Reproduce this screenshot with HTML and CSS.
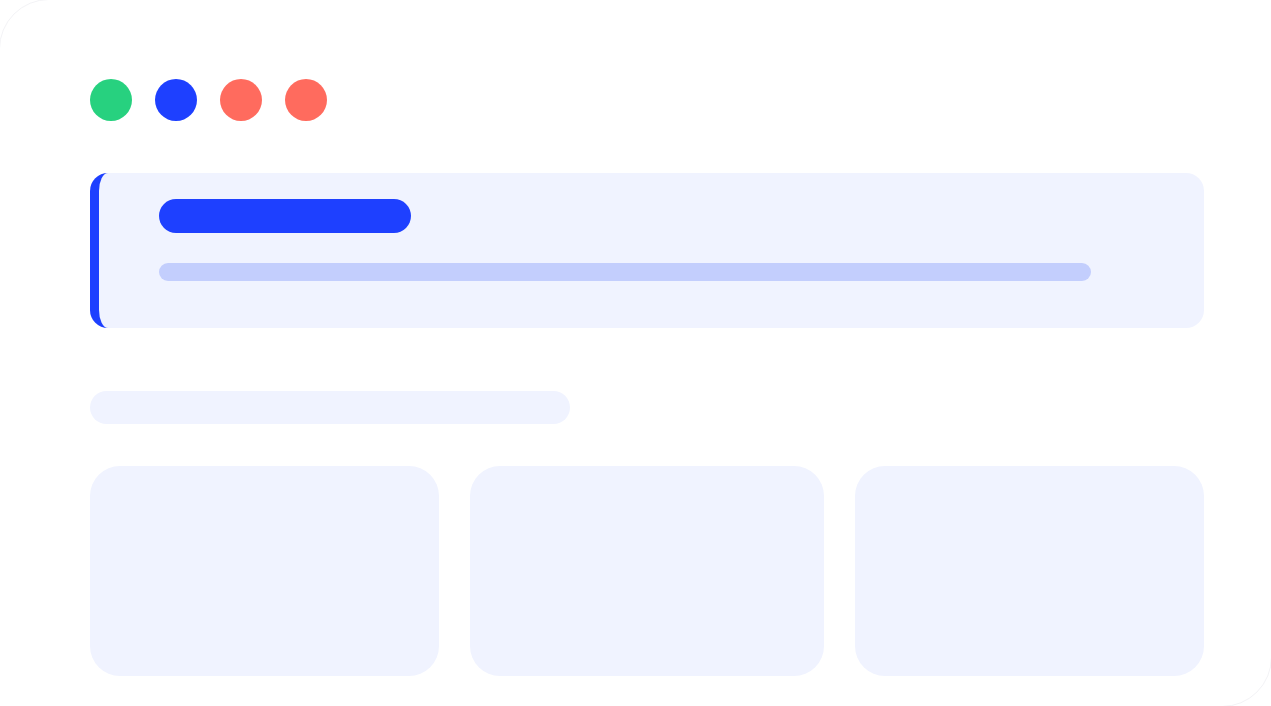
FILE: index.html
```html
<!DOCTYPE html>
<html>
<head>
<meta charset="utf-8">
<link rel="stylesheet" href="styles.css">
</head>
<body>
<div class="frame">
  <div class="dots">
    <span class="dot green"></span>
    <span class="dot blue"></span>
    <span class="dot coral"></span>
    <span class="dot coral"></span>
  </div>
  <div class="banner">
    <div class="pill"></div>
    <div class="bar"></div>
  </div>
  <div class="search"></div>
  <div class="cards">
    <div class="card"></div>
    <div class="card"></div>
    <div class="card"></div>
  </div>
</div>
</body>
</html>
```
FILE: styles.css
```css
html, body {
  margin: 0;
  padding: 0;
  background: #ffffff;
  overflow: hidden;
  font-family: "Liberation Sans", Arial, sans-serif;
}
.frame {
  box-sizing: border-box;
  margin: -1px;
  width: 1273px;
  height: 708px;
  border: 1px solid #f3f3f6;
  border-radius: 50px 0 50px 0;
  padding: 79px 67px 0 90px;
}
.dots {
  display: flex;
  gap: 23px;
}
.dot {
  width: 42px;
  height: 42px;
  border-radius: 50%;
  display: block;
}
.green { background: #27d17f; }
.blue { background: #1e40ff; }
.coral { background: #ff6b5e; }
.banner {
  box-sizing: border-box;
  margin-top: 52px;
  height: 155px;
  background: #f0f3ff;
  border-left: 9px solid #1e40ff;
  border-radius: 18px;
  padding: 26px 113px 0 60px;
}
.pill {
  width: 252px;
  height: 34px;
  border-radius: 17px;
  background: #1e40ff;
}
.bar {
  margin-top: 30px;
  height: 18px;
  border-radius: 9px;
  background: #c3cefd;
}
.search {
  margin-top: 63px;
  width: 480px;
  height: 33px;
  border-radius: 17px;
  background: #f0f3ff;
}
.cards {
  margin-top: 42px;
  display: grid;
  grid-template-columns: 349px 354px 349px;
  column-gap: 31px;
}
.card {
  height: 210px;
  border-radius: 30px;
  background: #f0f3ff;
}
```
